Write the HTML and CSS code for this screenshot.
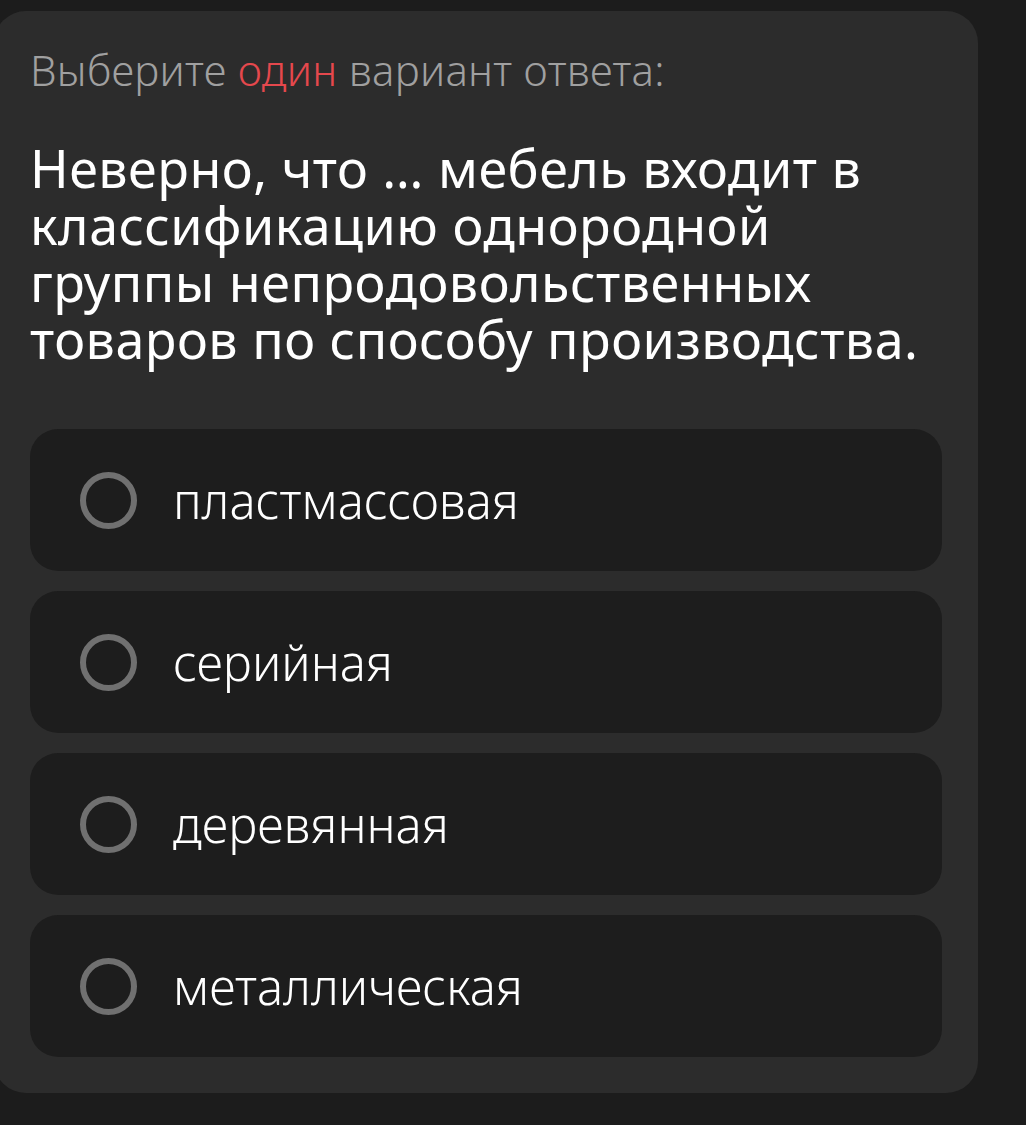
FILE: index.html
```html
<!DOCTYPE html>
<html lang="ru">
<head>
	<meta charset="UTF-8">
	<title>Вопрос</title>
	<link rel="stylesheet" href="styles.css">
</head>
<body>
	<div class="card">
		<div class="hint">Выберите <span class="accent">один</span> вариант ответа:</div>
		<div class="question">Неверно, что … мебель входит в<br>классификацию однородной<br>группы непродовольственных<br>товаров по способу производства.</div>
		<div class="options">
			<div class="option"><span class="radio"></span><span class="label">пластмассовая</span></div>
			<div class="option"><span class="radio"></span><span class="label">серийная</span></div>
			<div class="option"><span class="radio"></span><span class="label">деревянная</span></div>
			<div class="option"><span class="radio"></span><span class="label">металлическая</span></div>
		</div>
	</div>
</body>
</html>
```

FILE: styles.css
```css
body{
	margin: 0;
	background-color: #1c1c1c;
	font-family: "Noto Sans", "Liberation Sans", sans-serif;
}
/*карточка вопроса*/
.card{
	box-sizing: border-box;
	width: 984px;
	margin: 11px 0 0 -6px;
	padding: 34px 36px 36px 36px;
	background-color: #2c2c2c;
	border-radius: 32px;
}
.hint{
	font-size: 42px;
	font-weight: 300;
	line-height: 50px;
	letter-spacing: 0.3px;
	color: #a0a0a0;
	white-space: nowrap;
}
.hint .accent{
	color: #e5484d;
}
.question{
	margin-top: 44px;
	font-size: 52px;
	font-weight: 400;
	line-height: 57px;
	letter-spacing: 0.5px;
	color: #ffffff;
	white-space: nowrap;
}
/*варианты ответа*/
.options{
	margin-top: 62px;
	display: flex;
	flex-direction: column;
	gap: 20px;
}
.option{
	height: 142px;
	display: flex;
	align-items: center;
	padding-left: 50px;
	background-color: #1d1d1d;
	border-radius: 28px;
}
.radio{
	width: 45px;
	height: 45px;
	border: 6px solid #707070;
	border-radius: 50%;
	flex-shrink: 0;
}
.label{
	margin-left: 36px;
	font-size: 49px;
	font-weight: 300;
	color: #ffffff;
}
```
